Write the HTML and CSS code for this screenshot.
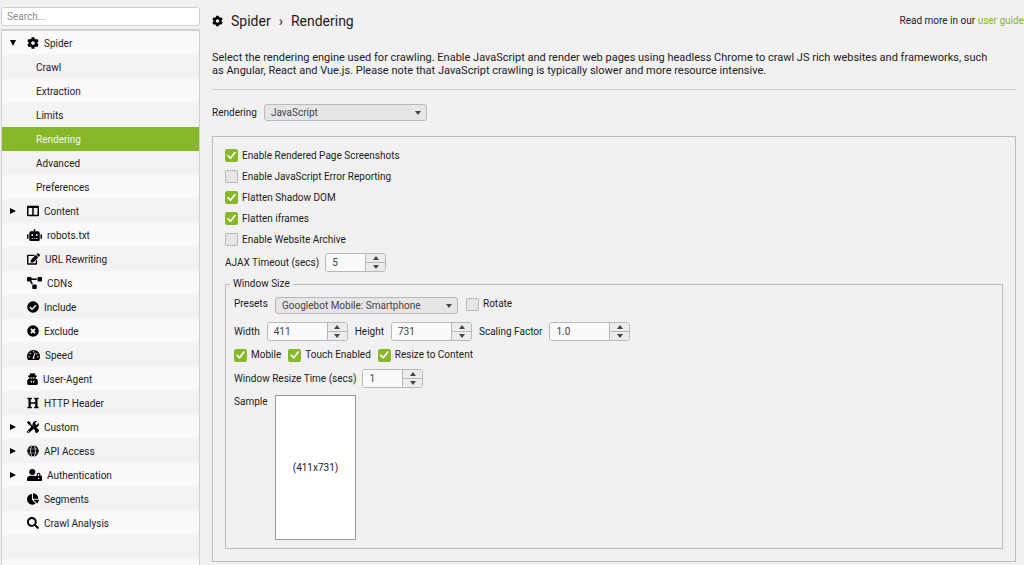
FILE: index.html
```html
<!DOCTYPE html>
<html lang="en">
<head>
<meta charset="utf-8">
<meta name="viewport" content="width=device-width, initial-scale=1">
<title>Spider › Rendering</title>
<link rel="stylesheet" href="styles.css">
</head>
<body>
<svg class="defs" aria-hidden="true">
  <symbol id="cog" viewBox="0 0 512 512"><path d="M487.4 315.7l-42.6-24.6c4.3-23.2 4.3-47 0-70.2l42.6-24.6c4.9-2.8 7.1-8.6 5.5-14-11.1-35.6-30-67.8-54.7-94.6-3.8-4.1-10-5.1-14.8-2.3L380.8 110c-17.9-15.4-38.5-27.3-60.8-35.1V25.8c0-5.6-3.9-10.5-9.4-11.7-36.7-8.2-74.3-7.8-109.2 0-5.5 1.2-9.4 6.1-9.4 11.7V75c-22.2 7.9-42.8 19.8-60.8 35.1L88.7 85.5c-4.9-2.8-11-1.9-14.8 2.3-24.7 26.7-43.6 58.9-54.7 94.6-1.7 5.4.6 11.2 5.5 14L67.3 221c-4.3 23.2-4.3 47 0 70.2l-42.6 24.6c-4.9 2.8-7.1 8.6-5.5 14 11.1 35.6 30 67.8 54.7 94.6 3.8 4.1 10 5.1 14.8 2.3l42.6-24.6c17.9 15.4 38.5 27.3 60.8 35.1v49.2c0 5.6 3.9 10.5 9.4 11.7 36.7 8.2 74.3 7.8 109.2 0 5.5-1.2 9.4-6.1 9.4-11.7v-49.2c22.2-7.9 42.8-19.8 60.8-35.1l42.6 24.6c4.9 2.8 11 1.9 14.8-2.3 24.7-26.7 43.6-58.9 54.7-94.6 1.5-5.5-.7-11.3-5.6-14.1zM256 336c-44.1 0-80-35.9-80-80s35.9-80 80-80 80 35.9 80 80-35.9 80-80 80z"/></symbol>
</svg>
<div class="app">
  <aside class="sidebar">
    <input class="search" type="search" placeholder="Search..." aria-label="Search">
    <nav class="tree" aria-label="Configuration">
      <a class="row" href="#"><span class="twist open"></span><svg class="icon"><use href="#cog"/></svg>Spider</a>
      <a class="row child" href="#">Crawl</a>
      <a class="row child" href="#">Extraction</a>
      <a class="row child" href="#">Limits</a>
      <a class="row child selected" href="#" aria-current="page">Rendering</a>
      <a class="row child" href="#">Advanced</a>
      <a class="row child" href="#">Preferences</a>
      <a class="row" href="#"><span class="twist closed"></span><svg class="icon" viewBox="0 0 512 512"><path d="M464 32H48C21.500 32 0 53.500 0 80v352c0 26.500 21.500 48 48 48h416c26.500 0 48-21.500 48-48V80c0-26.500-21.500-48-48-48zM224 416H64V130h160v286zm224 0H288V130h160v286z"/></svg>Content</a>
      <a class="row" href="#"><span class="twist"></span><svg class="icon wide" viewBox="0 0 640 512"><path d="M32,224H64V416H32A32,32,0,0,1,0,384V256A32,32,0,0,1,32,224Zm512-48V448a64,64,0,0,1-64,64H160a64,64,0,0,1-64-64V176a80,80,0,0,1,80-80H288V32a32,32,0,0,1,64,0V96H464A80,80,0,0,1,544,176ZM264,256a40,40,0,1,0-40,40A40,40,0,0,0,264,256Zm-8,128H192v32h64Zm96,0H288v32h64ZM456,256a40,40,0,1,0-40,40A40,40,0,0,0,456,256Zm-8,128H384v32h64ZM640,256V384a32,32,0,0,1-32,32H576V224h32A32,32,0,0,1,640,256Z"/></svg>robots.txt</a>
      <a class="row" href="#"><span class="twist"></span><svg class="icon mid" viewBox="0 0 576 512"><path d="M402.600 83.200l90.200 90.200c3.800 3.800 3.800 10 0 13.800L274.400 405.600l-92.800 10.300c-12.400 1.400-22.900-9.100-21.500-21.500l10.300-92.800L388.800 83.200c3.800-3.800 10-3.800 13.800 0zm162-22.900l-48.800-48.800c-15.200-15.200-39.900-15.200-55.200 0l-35.400 35.400c-3.800 3.800-3.800 10 0 13.800l90.200 90.200c3.800 3.800 10 3.800 13.800 0l35.400-35.400c15.200-15.300 15.200-40 0-55.200zM384 346.200V448H64V128h229.800c3.200 0 6.200-1.300 8.500-3.500l40-40c7.600-7.600 2.200-20.500-8.500-20.500H48C21.500 64 0 85.500 0 112v352c0 26.500 21.500 48 48 48h352c26.500 0 48-21.500 48-48V306.200c0-10.700-12.900-16-20.500-8.500l-40 40c-2.200 2.300-3.500 5.300-3.500 8.500z"/></svg>URL Rewriting</a>
      <a class="row" href="#"><span class="twist"></span><svg class="icon wide" viewBox="0 0 640 512"><path d="M384 320H256c-17.670 0-32 14.330-32 32v128c0 17.670 14.330 32 32 32h128c17.670 0 32-14.330 32-32V352c0-17.670-14.330-32-32-32zM192 32c0-17.670-14.330-32-32-32H32C14.330 0 0 14.330 0 32v128c0 17.670 14.330 32 32 32h95.720l73.160 128.040C211.980 300.980 232.400 288 256 288h.28L192 175.510V128h224V64H192V32zM608 0H480c-17.670 0-32 14.330-32 32v128c0 17.670 14.330 32 32 32h128c17.670 0 32-14.330 32-32V32c0-17.670-14.330-32-32-32z"/></svg>CDNs</a>
      <a class="row" href="#"><span class="twist"></span><svg class="icon" viewBox="0 0 512 512"><circle cx="256" cy="256" r="248"/><path class="cut" d="M124 260l92 92 172-172" stroke-width="64"/></svg>Include</a>
      <a class="row" href="#"><span class="twist"></span><svg class="icon" viewBox="0 0 512 512"><circle cx="256" cy="256" r="248"/><path class="cut" d="M166 166l180 180M346 166L166 346" stroke-width="76"/></svg>Exclude</a>
      <a class="row" href="#"><span class="twist"></span><svg class="icon mid" viewBox="0 0 576 512"><path d="M288 32C129 32 0 161 0 320c0 53 14 102 39 145 6 10 16 15 27 15h444c11 0 21-5 27-15 25-43 39-92 39-145 0-159-129-288-288-288z"/><path class="cut" d="M288 368l78-220" stroke-width="46"/><g class="cutfill"><circle cx="288" cy="112" r="32"/><circle cx="96" cy="336" r="34"/><circle cx="150" cy="192" r="34"/><circle cx="480" cy="336" r="34"/><circle cx="440" cy="200" r="30"/><circle cx="288" cy="392" r="44"/></g></svg>Speed</a>
      <a class="row" href="#"><span class="twist"></span><svg class="icon slim" viewBox="0 0 448 512"><path d="M92 110L126 30c8-18 24-30 42-24l56 14 56-14c18-6 34 6 42 24l34 80h34c28 0 28 54 0 56l-26 6v84h22c36 0 62 30 62 66v140c0 28-18 50-46 50H46c-28 0-46-22-46-50V322c0-36 26-66 62-66h22v-84l-26-6c-28-2-28-56 0-56z"/><g class="cutfill"><path d="M128 188h192v30c-10 34-68 34-80 0h-32c-12 34-70 34-80 0zM140 330h56v90h-34zM308 330h-56v90h34z"/></g></svg>User-Agent</a>
      <a class="row" href="#"><span class="twist"></span><svg class="icon" viewBox="0 0 512 512"><path d="M448 96v320h32a16 16 0 0 1 16 16v32a16 16 0 0 1-16 16H320a16 16 0 0 1-16-16v-32a16 16 0 0 1 16-16h32V288H160v128h32a16 16 0 0 1 16 16v32a16 16 0 0 1-16 16H32a16 16 0 0 1-16-16v-32a16 16 0 0 1 16-16h32V96H32a16 16 0 0 1-16-16V48a16 16 0 0 1 16-16h160a16 16 0 0 1 16 16v32a16 16 0 0 1-16 16h-32v128h192V96h-32a16 16 0 0 1-16-16V48a16 16 0 0 1 16-16h160a16 16 0 0 1 16 16v32a16 16 0 0 1-16 16z"/></svg>HTTP Header</a>
      <a class="row" href="#"><span class="twist closed"></span><svg class="icon" viewBox="0 0 512 512"><path d="M0 64L64 0l96 74v54l110 110-50 50L110 160H74z"/><path d="M285 300c-8-22-4-46 12-62s44-22 66-12l136 142c18 20 18 48 0 68l-62 64c-20 18-48 18-66 0z"/><path d="M18 412l218-216c-14-60 4-116 44-154C322 2 378-8 426 8l-76 76 12 68 68 12 76-76c16 50 6 104-34 144-32 32-76 46-118 40L102 494c-24 24-60 24-84 0s-24-58 0-82z"/><circle class="cutfill" cx="64" cy="448" r="22"/></svg>Custom</a>
      <a class="row" href="#"><span class="twist closed"></span><svg class="icon" viewBox="0 0 512 512"><circle cx="256" cy="256" r="248"/><g class="cut"><ellipse cx="256" cy="256" rx="104" ry="252" stroke-width="34"/><path d="M8 168h496M8 344h496" stroke-width="18"/></g></svg>API Access</a>
      <a class="row" href="#"><span class="twist closed"></span><svg class="icon wide" viewBox="0 0 640 512"><circle cx="224" cy="128" r="128"/><path d="M134 288h180c26 0 50 8 70 20v204H48c-26 0-48-22-48-48v-42c0-74 60-134 134-134z"/><path fill-rule="evenodd" d="M608 288h-32v-48c0-44-36-80-80-80s-80 36-80 80v48h-6c-18 0-32 14-32 32v160c0 18 14 32 32 32h198c18 0 32-14 32-32V320c0-18-14-32-32-32zM464 288v-48c0-44 64-44 64 0v48zM496 432a32 32 0 1 1 0-64 32 32 0 0 1 0 64z"/></svg>Authentication</a>
      <a class="row" href="#"><span class="twist"></span><svg class="icon" viewBox="0 0 544 512"><path d="M527.790 288H290.500l158.030 158.030c6.040 6.040 15.980 6.530 22.190.68 38.700-36.460 65.320-85.610 73.130-140.860 1.340-9.460-6.510-17.850-16.060-17.850zm-15.830-64.800C503.720 103.740 408.260 8.280 288.800.04 279.680-.59 272 7.100 272 16.240V240h223.770c9.140 0 16.820-7.680 16.190-16.800zM224 288V50.710c0-9.550-8.390-17.400-17.840-16.060C86.990 51.490-4.100 155.600.14 280.370 4.500 408.510 114.830 513.590 243.030 511.980c50.400-.63 96.970-16.870 135.260-44.030 7.900-5.600 8.420-17.230 1.570-24.080L224 288z"/></svg>Segments</a>
      <a class="row" href="#"><span class="twist"></span><svg class="icon" viewBox="0 0 512 512"><path d="M505 442.700L405.300 343c-4.500-4.500-10.600-7-17-7H372c27.600-35.300 44-79.700 44-128C416 93.100 322.900 0 208 0S0 93.100 0 208s93.100 208 208 208c48.300 0 92.700-16.400 128-44v16.300c0 6.400 2.500 12.500 7 17l99.700 99.700c9.400 9.400 24.600 9.400 33.900 0l28.300-28.300c9.400-9.400 9.400-24.600.1-34zM208 336c-70.700 0-128-57.200-128-128 0-70.700 57.200-128 128-128 70.700 0 128 57.200 128 128 0 70.700-57.200 128-128 128z"/></svg>Crawl Analysis</a>
    </nav>
  </aside>

  <main class="main">
    <header class="head">
      <h1 class="title"><svg class="icon"><use href="#cog"/></svg><span>Spider</span><span class="sep">›</span><span>Rendering</span></h1>
      <p class="guide">Read more in our <a href="#">user guide</a></p>
    </header>
    <div class="body">
      <div class="intro"><p>Select the rendering engine used for crawling. Enable JavaScript and render web pages using headless Chrome to crawl JS rich websites and frameworks, such as Angular, React and Vue.js. Please note that JavaScript crawling is typically slower and more resource intensive.</p></div>
      <div class="engine">
        <label for="engine">Rendering</label>
        <span class="combo"><select id="engine"><option>JavaScript</option></select></span>
      </div>
      <section class="panel">
        <label class="check"><input type="checkbox" checked>Enable Rendered Page Screenshots</label>
        <label class="check"><input type="checkbox">Enable JavaScript Error Reporting</label>
        <label class="check"><input type="checkbox" checked>Flatten Shadow DOM</label>
        <label class="check"><input type="checkbox" checked>Flatten iframes</label>
        <label class="check"><input type="checkbox">Enable Website Archive</label>
        <div class="line">
          <label for="ajax">AJAX Timeout (secs)</label>
          <span class="spin short"><input id="ajax" type="number" value="5"><button type="button" class="up" aria-label="Increase"></button><button type="button" class="down" aria-label="Decrease"></button></span>
        </div>
        <fieldset class="group">
          <legend>Window Size</legend>
          <div class="line presets">
            <label class="col" for="preset">Presets</label>
            <span class="combo large"><select id="preset"><option>Googlebot Mobile: Smartphone</option></select></span>
            <label class="check"><input type="checkbox">Rotate</label>
          </div>
          <div class="line dims">
            <label for="width">Width</label>
            <span class="spin"><input id="width" type="number" value="411"><button type="button" class="up" aria-label="Increase"></button><button type="button" class="down" aria-label="Decrease"></button></span>
            <label for="height">Height</label>
            <span class="spin"><input id="height" type="number" value="731"><button type="button" class="up" aria-label="Increase"></button><button type="button" class="down" aria-label="Decrease"></button></span>
            <label for="scale">Scaling Factor</label>
            <span class="spin"><input id="scale" type="number" step="0.1" value="1.0"><button type="button" class="up" aria-label="Increase"></button><button type="button" class="down" aria-label="Decrease"></button></span>
          </div>
          <div class="line flags">
            <label class="check"><input type="checkbox" checked>Mobile</label>
            <label class="check"><input type="checkbox" checked>Touch Enabled</label>
            <label class="check"><input type="checkbox" checked>Resize to Content</label>
          </div>
          <div class="line resize">
            <label for="resize">Window Resize Time (secs)</label>
            <span class="spin short"><input id="resize" type="number" value="1"><button type="button" class="up" aria-label="Increase"></button><button type="button" class="down" aria-label="Decrease"></button></span>
          </div>
          <div class="sample">
            <span class="col">Sample</span>
            <div class="preview">(411x731)</div>
          </div>
        </fieldset>
      </section>
    </div>
  </main>
</div>
</body>
</html>
```
FILE: styles.css
```css
* { box-sizing: border-box; }
body {
  margin: 0;
  background: #f1f1f1;
  color: #1c1c1c;
  font: 10px/14px Roboto, "Liberation Sans", sans-serif;
}
h1, p { margin: 0; font-weight: 400; }
input, select, button { font: inherit; color: inherit; margin: 0; }
.defs { position: absolute; width: 0; height: 0; }
.app { display: flex; min-height: 100vh; }

/* Sidebar */
.sidebar {
  display: flex;
  flex-direction: column;
  flex: none;
  width: 200px;
  gap: 3px;
  padding: 7px 0 0 1px;
}
.search {
  appearance: none;
  height: 19px;
  padding: 0 5px;
  border: 1px solid #cfcfcf;
  border-radius: 3px;
  background: #fff;
  outline: none;
}
.search::placeholder { color: #8a8a8a; opacity: 1; }
.tree {
  flex: 1;
  border: 1px solid #d0d0d0;
  border-top-width: 2px;
  border-bottom: 0;
  background: repeating-linear-gradient(#f9f9f9 0 24px, #f3f3f3 24px 48px);
}
.row {
  --stripe: #f9f9f9;
  display: flex;
  align-items: center;
  height: 24px;
  padding-top: 2px;
  color: #222;
  text-decoration: none;
}
.row:nth-child(even) { --stripe: #f3f3f3; }
.child { padding-left: 34px; }
.selected { background: #86b82a; color: #f4f8ea; }
.twist { width: 25px; padding: 0 0 2px 8px; flex: none; }
.twist::before { content: ""; display: block; width: 6px; height: 6px; background: #000; }
.twist:not(.open):not(.closed)::before { background: none; }
.open::before { clip-path: polygon(0 0, 100% 0, 50% 100%); }
.closed::before { clip-path: polygon(0 0, 100% 50%, 0 100%); }
.icon { width: 12px; height: 12px; margin-right: 5px; flex: none; fill: #000; }
.row .icon { margin-bottom: 2px; }
.icon.wide { width: 15px; }
.icon.mid { width: 13px; }
.icon.slim { width: 11px; }
.cut { fill: none; stroke: var(--stripe); }
.cutfill { fill: var(--stripe); }

/* Main column */
.main { flex: 1; min-width: 0; padding: 10px 0 3px 12px; }
.head { display: flex; align-items: center; justify-content: space-between; height: 22px; }
.title { display: flex; align-items: center; gap: 8px; font-size: 14px; line-height: 20px; }
.title .icon { width: 11px; margin-right: 0; }
.guide { white-space: nowrap; }
.guide a { color: #86b82a; text-decoration: none; }
.body { padding-right: 8px; }
.intro {
  margin-top: 19px;
  padding-bottom: 12px;
  border-bottom: 1px solid #cfcfcf;
  font-size: 11px;
  line-height: 13px;
}
.intro p { padding-right: 16px; }
.engine { display: flex; align-items: center; gap: 7px; margin-top: 14px; }
.combo { position: relative; display: block; width: 163px; }
.combo.large { width: 183px; }
.combo select {
  appearance: none;
  display: block;
  width: 100%;
  height: 17px;
  padding: 0 6px;
  border: 1px solid #b9b9b9;
  border-radius: 3px;
  background: #e6e6e6;
  color: #444;
}
.combo::after {
  content: "";
  position: absolute;
  top: 7px;
  right: 6px;
  border: 3px solid transparent;
  border-top: 4px solid #444;
  border-bottom: 0;
}
.panel {
  margin-top: 15px;
  padding: 11px 12px 12px;
  border: 1px solid #bcbcbc;
}
.check { display: flex; align-items: center; gap: 4px; }
.panel > .check { height: 15px; margin-bottom: 6px; }
.check input {
  appearance: none;
  display: grid;
  place-items: center;
  width: 13px;
  height: 13px;
  border: 1px solid #b9b9b9;
  border-radius: 2px;
  background: #e6e6e6;
}
.check input:checked { border-color: #86b82a; background: #86b82a; }
.check input:checked::before {
  content: "";
  width: 9px;
  height: 8px;
  background: #fff;
  clip-path: polygon(0 55%, 12% 40%, 38% 68%, 86% 0, 100% 12%, 40% 100%);
}
.line { display: flex; align-items: center; gap: 6px; }
.spin {
  display: grid;
  grid-template: 9px 8px / 1fr 19px;
  width: 81px;
  border: 1px solid #b9b9b9;
  border-radius: 3px;
  overflow: hidden;
}
.spin.short { width: 61px; }
.spin input {
  appearance: textfield;
  grid-row: 1 / 3;
  width: 100%;
  min-width: 0;
  padding: 0 6px;
  border: 0;
  border-right: 1px solid #b9b9b9;
  background: #fafafa;
  color: #444;
  outline: none;
}
.spin input::-webkit-inner-spin-button { appearance: none; margin: 0; }
.spin button { display: grid; place-items: center; padding: 0; border: 0; background: #ececec; }
.spin .up { border-bottom: 1px solid #b9b9b9; }
.spin button::before { content: ""; border: 3px solid transparent; }
.spin .up::before { border-bottom: 4px solid #444; border-top: 0; }
.spin .down::before { border-top: 4px solid #444; border-bottom: 0; }

.group {
  min-width: 0;
  margin: 5px 0 0;
  padding: 6px 8px 8px;
  border: 1px solid #bcbcbc;
}
.group legend { margin-left: -4px; padding: 0 3px; line-height: 14px; }
.col { width: 33px; flex: none; }
.presets { align-items: flex-start; gap: 8px; }
.dims { gap: 7px; margin-top: 8px; }
.flags { gap: 7px; margin-top: 7px; }
.resize { margin-top: 7px; }
.sample { display: flex; gap: 8px; margin-top: 7px; }
.preview {
  display: grid;
  place-items: center;
  width: 81px;
  height: 145px;
  border: 1px solid #999;
  background: #fff;
}
```
